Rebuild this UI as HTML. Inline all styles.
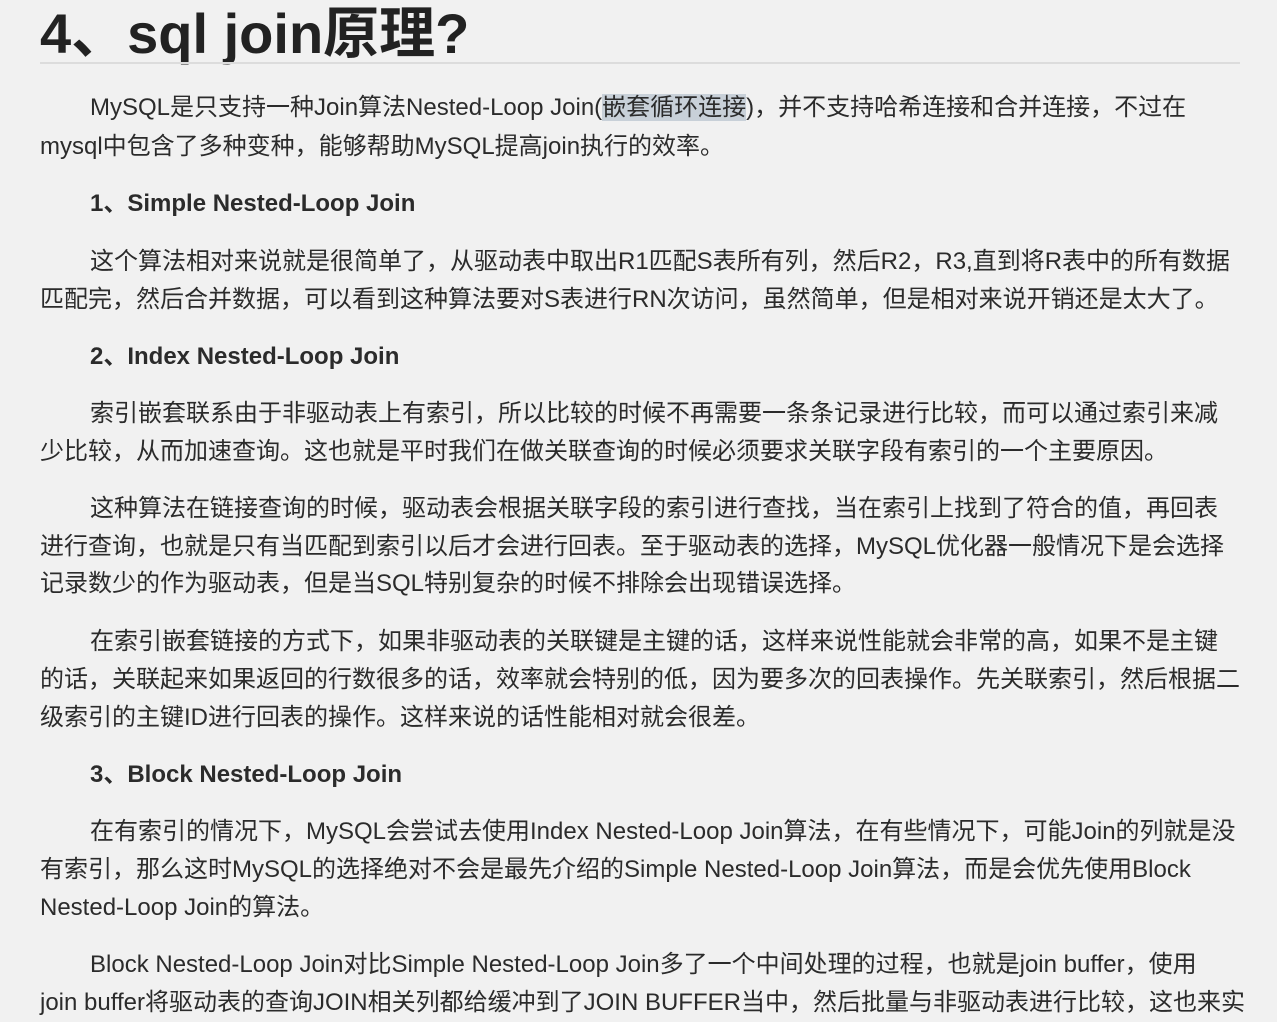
<!DOCTYPE html>
<html><head><meta charset="utf-8"><style>
html,body{margin:0;padding:0;}
body{width:1277px;height:1020px;overflow:hidden;background:#f1f1f1;position:relative;
font-family:"Liberation Sans","Noto Sans CJK SC",sans-serif;color:#2b2b2b;}
.l{position:absolute;white-space:nowrap;font-size:24px;line-height:38px;height:38px;}
.b{font-weight:bold;}
h1{position:absolute;left:40px;top:0px;margin:0;font-size:56px;line-height:68px;font-weight:bold;color:#222;white-space:nowrap;}
.hr{position:absolute;left:40px;top:62px;width:1200px;height:2px;background:#dcdcdc;}
.hl{background:#c8d0d8;}
</style></head><body>
<h1>4、sql join原理?</h1>
<div class="hr"></div>
<div class="l" style="left:90px;top:89px">MySQL是只支持一种Join算法Nested-Loop Join(<span class="hl">嵌套循环连接</span>)，并不支持哈希连接和合并连接，不过在</div>
<div class="l" style="left:40px;top:128px">mysql中包含了多种变种，能够帮助MySQL提高join执行的效率。</div>
<div class="l b" style="left:90px;top:185px">1、Simple Nested-Loop Join</div>
<div class="l" style="left:90px;top:243px">这个算法相对来说就是很简单了，从驱动表中取出R1匹配S表所有列，然后R2，R3,直到将R表中的所有数据</div>
<div class="l" style="left:40px;top:281px">匹配完，然后合并数据，可以看到这种算法要对S表进行RN次访问，虽然简单，但是相对来说开销还是太大了。</div>
<div class="l b" style="left:90px;top:338px">2、Index Nested-Loop Join</div>
<div class="l" style="left:90px;top:395px">索引嵌套联系由于非驱动表上有索引，所以比较的时候不再需要一条条记录进行比较，而可以通过索引来减</div>
<div class="l" style="left:40px;top:433px">少比较，从而加速查询。这也就是平时我们在做关联查询的时候必须要求关联字段有索引的一个主要原因。</div>
<div class="l" style="left:90px;top:490px">这种算法在链接查询的时候，驱动表会根据关联字段的索引进行查找，当在索引上找到了符合的值，再回表</div>
<div class="l" style="left:40px;top:528px">进行查询，也就是只有当匹配到索引以后才会进行回表。至于驱动表的选择，MySQL优化器一般情况下是会选择</div>
<div class="l" style="left:40px;top:565px">记录数少的作为驱动表，但是当SQL特别复杂的时候不排除会出现错误选择。</div>
<div class="l" style="left:90px;top:623px">在索引嵌套链接的方式下，如果非驱动表的关联键是主键的话，这样来说性能就会非常的高，如果不是主键</div>
<div class="l" style="left:40px;top:661px">的话，关联起来如果返回的行数很多的话，效率就会特别的低，因为要多次的回表操作。先关联索引，然后根据二</div>
<div class="l" style="left:40px;top:699px">级索引的主键ID进行回表的操作。这样来说的话性能相对就会很差。</div>
<div class="l b" style="left:90px;top:756px">3、Block Nested-Loop Join</div>
<div class="l" style="left:90px;top:813px">在有索引的情况下，MySQL会尝试去使用Index Nested-Loop Join算法，在有些情况下，可能Join的列就是没</div>
<div class="l" style="left:40px;top:851px">有索引，那么这时MySQL的选择绝对不会是最先介绍的Simple Nested-Loop Join算法，而是会优先使用Block</div>
<div class="l" style="left:40px;top:889px">Nested-Loop Join的算法。</div>
<div class="l" style="left:90px;top:946px">Block Nested-Loop Join对比Simple Nested-Loop Join多了一个中间处理的过程，也就是join buffer，使用</div>
<div class="l" style="left:40px;top:984px">join buffer将驱动表的查询JOIN相关列都给缓冲到了JOIN BUFFER当中，然后批量与非驱动表进行比较，这也来实</div>
</body></html>
